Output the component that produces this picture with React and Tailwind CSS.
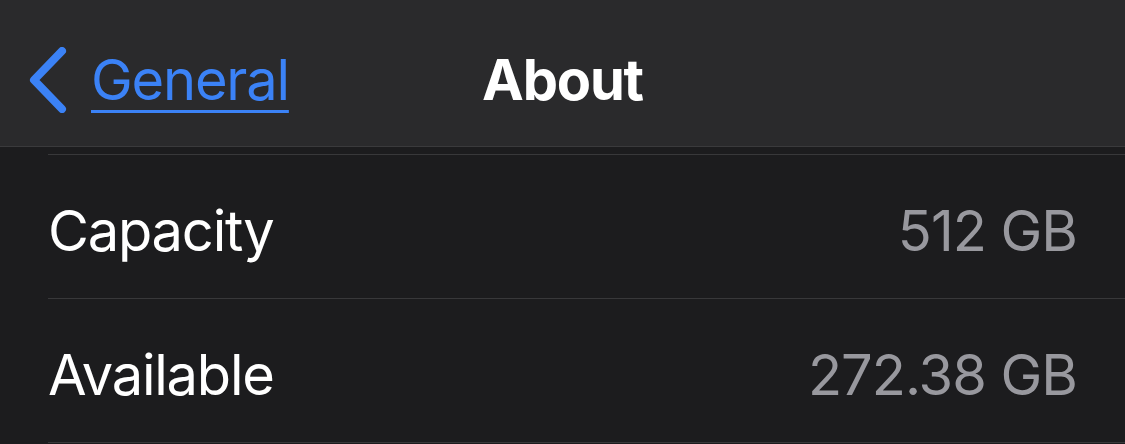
export default function App() {
  const font = { fontFamily: 'Inter, "Noto Sans", sans-serif' };
  return (
    <div className="w-[1125px] h-[444px] overflow-hidden bg-[#1c1c1e] text-white" style={font}>
      <header className="h-[147px] bg-[#2a2a2c] border-b border-[#3a3a3c] grid grid-cols-[1fr_auto_1fr] items-center">
        <div className="flex items-center pl-[28px] pt-[13px]">
          <svg width="40" height="66" viewBox="0 0 40 66" className="mr-[23px]">
            <path d="M34 4 L6 33 L34 62" fill="none" stroke="#3b82f6" strokeWidth="8" strokeLinecap="round" strokeLinejoin="round" />
          </svg>
          <span className="text-[56px] leading-none text-[#3b82f6] underline decoration-[3px] underline-offset-[10px] tracking-[-1.2px]">General</span>
        </div>
        <div className="text-[56px] font-bold leading-none pt-[13px] tracking-[-1.2px]">About</div>
        <div />
      </header>
      <div className="pl-[48px] pt-[7px]">
        <div className="border-t border-[#38383a]">
          <div className="h-[143px] flex items-center justify-between pr-[48px] pt-[8px]">
            <span className="text-[56px] leading-none tracking-[-1.2px]">Capacity</span>
            <span className="text-[56px] leading-none text-[#98989e] tracking-[-1px]">512 GB</span>
          </div>
        </div>
        <div className="border-t border-[#38383a]">
          <div className="h-[143px] flex items-center justify-between pr-[48px] pt-[8px]">
            <span className="text-[56px] leading-none tracking-[-1.2px]">Available</span>
            <span className="text-[56px] leading-none text-[#98989e] tracking-[-1px]">272.38 GB</span>
          </div>
        </div>
        <div className="border-t border-[#38383a]" />
      </div>
    </div>
  );
}
